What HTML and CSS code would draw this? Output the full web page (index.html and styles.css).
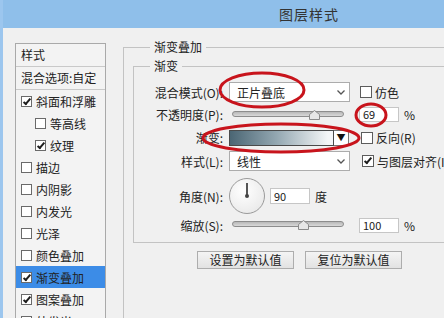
FILE: index.html
```html
<!DOCTYPE html>
<html lang="zh-CN">
<head>
    <meta charset="UTF-8">
    <meta name="viewport" content="width=device-width, initial-scale=1.0">
    <title>图层样式</title>
    <link rel="stylesheet" href="styles.css">
</head>
<body>
    <div class="window">
        <div class="titlebar">图层样式</div>
        <div class="content">
            <div class="style-list">
                <div class="list-head">样式</div>
                <div class="list-head">混合选项:自定</div>
                <div class="item"><span class="cb checked"></span>斜面和浮雕</div>
                <div class="item sub"><span class="cb"></span>等高线</div>
                <div class="item sub"><span class="cb checked"></span>纹理</div>
                <div class="item"><span class="cb"></span>描边</div>
                <div class="item"><span class="cb"></span>内阴影</div>
                <div class="item"><span class="cb"></span>内发光</div>
                <div class="item"><span class="cb"></span>光泽</div>
                <div class="item"><span class="cb"></span>颜色叠加</div>
                <div class="item active"><span class="cb checked"></span>渐变叠加</div>
                <div class="item"><span class="cb checked"></span>图案叠加</div>
                <div class="item"><span class="cb"></span>外发光</div>
            </div>

            <fieldset class="group outer">
                <legend>渐变叠加</legend>
                <fieldset class="group inner">
                    <legend>渐变</legend>

                    <div class="row row-blend">
                        <label>混合模式(O):</label>
                        <div class="select">正片叠底<svg class="chev" width="8" height="5" viewBox="0 0 8 5"><polyline points="0.5,0.5 4,4 7.5,0.5" fill="none" stroke="#555" stroke-width="1.3"/></svg></div>
                        <span class="check"><span class="box"></span>仿色</span>
                    </div>

                    <div class="row row-opacity">
                        <label>不透明度(P):</label>
                        <div class="slider"><div class="track"></div><svg class="thumb" style="left: 69%;" width="11" height="10" viewBox="0 0 11 10"><polygon points="5.5,0.5 10.5,4.5 10.5,9.5 0.5,9.5 0.5,4.5" fill="#e6e6e6" stroke="#8a8a8a"/></svg></div>
                        <div class="num">69</div>
                        <span class="unit">%</span>
                    </div>

                    <div class="row row-gradient">
                        <label>渐变:</label>
                        <div class="gradient"><div class="swatch"></div><div class="drop">&#9660;</div></div>
                        <span class="check"><span class="box"></span>反向(R)</span>
                    </div>

                    <div class="row row-style">
                        <label>样式(L):</label>
                        <div class="select">线性<svg class="chev" width="8" height="5" viewBox="0 0 8 5"><polyline points="0.5,0.5 4,4 7.5,0.5" fill="none" stroke="#555" stroke-width="1.3"/></svg></div>
                        <span class="check"><span class="box checked"></span>与图层对齐(I)</span>
                    </div>

                    <div class="row row-angle">
                        <label>角度(N):</label>
                        <div class="dial"><span class="hand"></span><span class="pin"></span></div>
                        <div class="num">90</div>
                        <span class="unit">度</span>
                    </div>

                    <div class="row row-scale">
                        <label>缩放(S):</label>
                        <div class="slider"><div class="track"></div><svg class="thumb" style="left: 60%;" width="11" height="10" viewBox="0 0 11 10"><polygon points="5.5,0.5 10.5,4.5 10.5,9.5 0.5,9.5 0.5,4.5" fill="#e6e6e6" stroke="#8a8a8a"/></svg></div>
                        <div class="num">100</div>
                        <span class="unit">%</span>
                    </div>
                </fieldset>

                <div class="buttons">
                    <button>设置为默认值</button>
                    <button>复位为默认值</button>
                </div>
            </fieldset>
        </div>

        <!-- red marks drawn over the screenshot -->
        <svg class="marks" width="444" height="318" viewBox="0 0 444 318">
            <ellipse cx="262" cy="90" rx="42" ry="17" fill="none" stroke="#c8141c" stroke-width="3"/>
            <ellipse cx="371" cy="115" rx="15" ry="11" fill="none" stroke="#c8141c" stroke-width="3"/>
            <ellipse cx="281" cy="138" rx="78" ry="14" fill="none" stroke="#c8141c" stroke-width="3"/>
        </svg>
    </div>
</body>
</html>
```

FILE: styles.css
```css
body {
    margin: 0;
    padding: 0;
    background-color: #f0f0f0;
    font-family: "Noto Sans CJK SC", "Liberation Sans", sans-serif;
    font-size: 12px;
    color: #222;
    overflow: hidden;
}
.window {
    position: relative;
    width: 444px;
    height: 318px;
    overflow: hidden;
    border-left: 3px solid #9cc6ee;
    box-sizing: border-box;
}
.titlebar {
    height: 28px;
    line-height: 28px;
    margin-left: -3px;
    padding-left: 279px;
    background-color: #8fbfea;
    font-size: 14px;
    letter-spacing: 1px;
    color: #333;
}
.content {
    display: flex;
    align-items: flex-start;
    padding-top: 11px;
}

/* style list */
.style-list {
    width: 89px;
    height: 300px;
    margin-left: 12px;
    margin-top: 4px;
    border: 1px solid #a9a9a9;
    background: #f3f3f3;
    flex-shrink: 0;
}
.list-head {
    padding-left: 5px;
    line-height: 22px;
    border-bottom: 1px solid #c9c9c9;
}
.item {
    display: flex;
    align-items: center;
    height: 22px;
    padding-left: 5px;
}
.item.sub {
    padding-left: 19px;
}
.item.active {
    background-color: #3c8ce7;
}
.cb {
    position: relative;
    width: 9px;
    height: 9px;
    border: 1px solid #6a6a6a;
    background: #fff;
    margin-right: 4px;
}
.cb.checked::after,
.box.checked::after {
    content: "";
    position: absolute;
    left: 3px;
    top: 0;
    width: 2px;
    height: 6px;
    border: solid #1e1e1e;
    border-width: 0 2px 2px 0;
    transform: rotate(40deg);
}

/* groups */
.group {
    margin: 0;
    border: 1px solid #c3c3c3;
    min-width: 0;
}
.group legend {
    padding: 0 4px;
    line-height: 16px;
}
.outer {
    margin-left: 17px;
    width: 360px;
    padding: 3px 0 60px 9px;
    flex-shrink: 0;
}
.outer > legend {
    margin-left: 17px;
}
.inner {
    width: 340px;
    padding: 7px 0 8px 0;
}
.inner > legend {
    margin-left: 16px;
}

/* rows */
.row {
    display: flex;
    align-items: center;
}
.row label {
    width: 89px;
    margin-right: 6px;
    text-align: right;
    flex-shrink: 0;
}
.row-blend { height: 22px; }
.row-opacity { height: 23px; }
.row-gradient { height: 23px; }
.row-style { height: 24px; }
.row-angle { height: 40px; margin-top: 3px; }
.row-scale { height: 18px; }

.select {
    display: flex;
    align-items: center;
    justify-content: space-between;
    box-sizing: border-box;
    width: 121px;
    height: 20px;
    padding-left: 7px;
    padding-right: 4px;
    border: 1px solid #acacac;
    background: #fff;
}
.check {
    display: flex;
    align-items: center;
    margin-left: 10px;
    white-space: nowrap;
}
.row-gradient .check,
.row-style .check {
    margin-left: 12px;
}
.box {
    position: relative;
    width: 10px;
    height: 10px;
    border: 1px solid #5c5c5c;
    background: #fff;
    margin-right: 3px;
}

.slider {
    position: relative;
    width: 120px;
    height: 12px;
}
.track {
    position: absolute;
    left: 3px;
    right: 5px;
    top: 2px;
    height: 4px;
    border-radius: 3px;
    border: 1px solid #8c8c8c;
    background: linear-gradient(#b8b8b8, #d8d8d8);
}
.thumb {
    position: absolute;
    top: 1px;
    margin-left: -3px;
}
.num {
    box-sizing: border-box;
    width: 40px;
    height: 15px;
    line-height: 13px;
    padding-left: 3px;
    border: 1px solid #c6c6c6;
    background: #fff;
    font-size: 11px;
    margin-left: 10px;
}
.unit {
    margin-left: 5px;
}
.row-angle .num {
    margin-left: 5px;
    height: 16px;
    line-height: 14px;
}

.gradient {
    display: flex;
    width: 120px;
    height: 16px;
}
.swatch {
    flex: 1;
    border: 1px solid #4a4a4a;
    background: linear-gradient(to right, #4b6674, #93a7b1 45%, #f4f6f7 95%);
}
.drop {
    width: 14px;
    border: 1px solid #777;
    border-left: none;
    background: #fff;
    font-size: 9px;
    line-height: 14px;
    text-align: center;
    color: #111;
}

.dial {
    position: relative;
    width: 34px;
    height: 34px;
    border-radius: 50%;
    border: 1px solid #9a9a9a;
    background: radial-gradient(circle at 40% 35%, #ffffff, #e4e4e4);
}
.hand {
    position: absolute;
    left: 16px;
    top: 4px;
    width: 2px;
    height: 13px;
    background: #555;
}
.pin {
    position: absolute;
    left: 15px;
    top: 15px;
    width: 4px;
    height: 4px;
    border-radius: 50%;
    background: #444;
}

.buttons {
    display: flex;
    gap: 11px;
    margin-top: 8px;
    margin-left: 64px;
}
.buttons button {
    width: 97px;
    height: 18px;
    padding: 0;
    border: 1px solid #adadad;
    background: linear-gradient(#f4f4f4, #e2e2e2);
    font-family: "Noto Sans CJK SC", sans-serif;
    font-size: 12px;
    line-height: 16px;
    color: #222;
}

.marks {
    position: absolute;
    left: -3px;
    top: 0;
    pointer-events: none;
}
```
